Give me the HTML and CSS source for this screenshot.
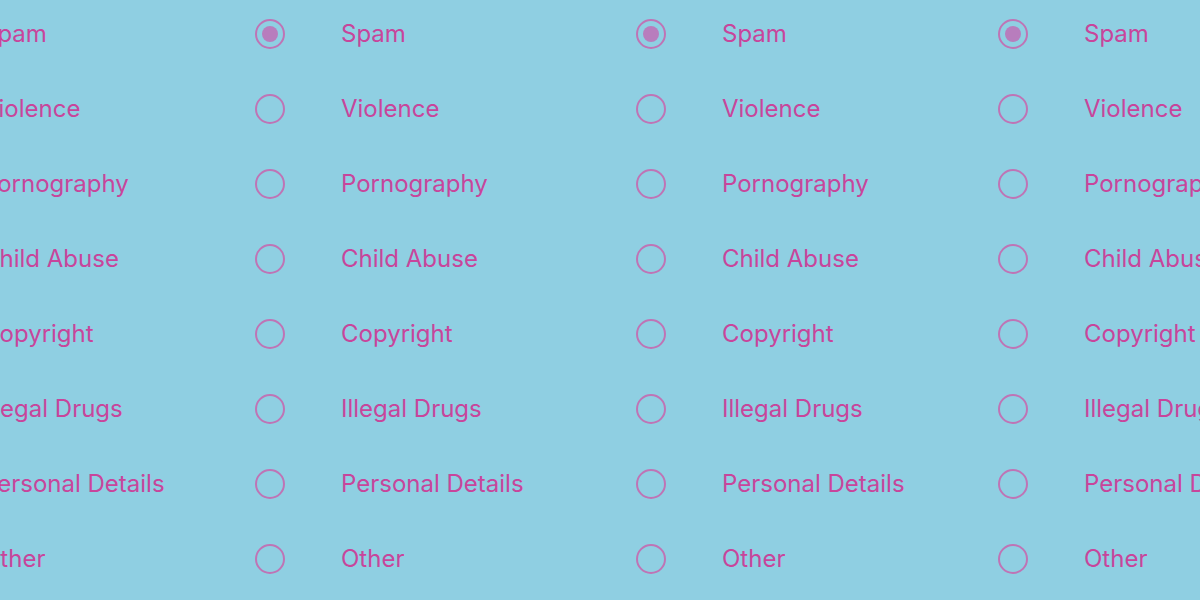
FILE: index.html
```html
<!DOCTYPE html>
<html lang="en">
<head>
<meta charset="utf-8">
<title>Report reasons</title>
<link rel="stylesheet" href="styles.css">
</head>
<body>
<div class="strip">
  <div class="group">
    <div class="option"><span class="radio checked"></span><span class="label">Spam</span></div>
    <div class="option"><span class="radio"></span><span class="label">Violence</span></div>
    <div class="option"><span class="radio"></span><span class="label">Pornography</span></div>
    <div class="option"><span class="radio"></span><span class="label">Child Abuse</span></div>
    <div class="option"><span class="radio"></span><span class="label">Copyright</span></div>
    <div class="option"><span class="radio"></span><span class="label">Illegal Drugs</span></div>
    <div class="option"><span class="radio"></span><span class="label">Personal Details</span></div>
    <div class="option"><span class="radio"></span><span class="label">Other</span></div>
  </div>
  <div class="group">
    <div class="option"><span class="radio checked"></span><span class="label">Spam</span></div>
    <div class="option"><span class="radio"></span><span class="label">Violence</span></div>
    <div class="option"><span class="radio"></span><span class="label">Pornography</span></div>
    <div class="option"><span class="radio"></span><span class="label">Child Abuse</span></div>
    <div class="option"><span class="radio"></span><span class="label">Copyright</span></div>
    <div class="option"><span class="radio"></span><span class="label">Illegal Drugs</span></div>
    <div class="option"><span class="radio"></span><span class="label">Personal Details</span></div>
    <div class="option"><span class="radio"></span><span class="label">Other</span></div>
  </div>
  <div class="group">
    <div class="option"><span class="radio checked"></span><span class="label">Spam</span></div>
    <div class="option"><span class="radio"></span><span class="label">Violence</span></div>
    <div class="option"><span class="radio"></span><span class="label">Pornography</span></div>
    <div class="option"><span class="radio"></span><span class="label">Child Abuse</span></div>
    <div class="option"><span class="radio"></span><span class="label">Copyright</span></div>
    <div class="option"><span class="radio"></span><span class="label">Illegal Drugs</span></div>
    <div class="option"><span class="radio"></span><span class="label">Personal Details</span></div>
    <div class="option"><span class="radio"></span><span class="label">Other</span></div>
  </div>
  <div class="group">
    <div class="option"><span class="radio checked"></span><span class="label">Spam</span></div>
    <div class="option"><span class="radio"></span><span class="label">Violence</span></div>
    <div class="option"><span class="radio"></span><span class="label">Pornography</span></div>
    <div class="option"><span class="radio"></span><span class="label">Child Abuse</span></div>
    <div class="option"><span class="radio"></span><span class="label">Copyright</span></div>
    <div class="option"><span class="radio"></span><span class="label">Illegal Drugs</span></div>
    <div class="option"><span class="radio"></span><span class="label">Personal Details</span></div>
    <div class="option"><span class="radio"></span><span class="label">Other</span></div>
  </div>
</div>
</body>
</html>
```
FILE: styles.css
```css
html, body {
  margin: 0;
  padding: 0;
  background: #8fcfe2;
  overflow: hidden;
}

body {
  width: 1200px;
  height: 600px;
  font-family: Inter, Roboto, "Liberation Sans", sans-serif;
}

.strip {
  display: grid;
  grid-template-columns: 359px 381px 362px 400px;
  margin-left: -104px;
  margin-top: -4px;
}

.group {
  display: flex;
  flex-direction: column;
}

.option {
  height: 75px;
  display: flex;
  align-items: center;
  gap: 56px;
  white-space: nowrap;
}

.radio {
  flex: none;
  width: 30px;
  height: 30px;
  box-sizing: border-box;
  border: 2.75px solid #bf74b5;
  border-radius: 50%;
  display: flex;
  align-items: center;
  justify-content: center;
}

.radio.checked::after {
  content: "";
  width: 16px;
  height: 16px;
  border-radius: 50%;
  background: #b87dbd;
}

.label {
  font-size: 24px;
  color: #c8459b;
  line-height: 1;
  padding-top: 1px;
}
```
